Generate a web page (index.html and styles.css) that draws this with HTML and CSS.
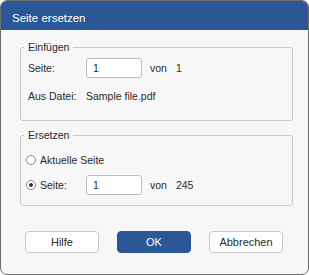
FILE: index.html
```html
<!DOCTYPE html>
<html lang="de">
  <head>
    <meta charset="utf-8" />
    <title>Seite ersetzen</title>
    <link rel="stylesheet" href="styles.css">
  </head>
  <body>
    <div class="dialog">
      <div class="titlebar">Seite ersetzen</div>
      <div class="dialog-body">
        <fieldset class="group group-insert">
          <legend>Einfügen</legend>
          <div class="row">
            <label for="src" class="label">Seite:</label>
            <input id="src" type="text" class="field" value="1">
            <span class="of">von</span>
            <span class="total">1</span>
          </div>
          <div class="row row-file">
            <span class="label">Aus Datei:</span>
            <span>Sample file.pdf</span>
          </div>
        </fieldset>
        <fieldset class="group group-replace">
          <legend>Ersetzen</legend>
          <div class="row">
            <input id="r1" type="radio" name="mode" class="radio">
            <label for="r1">Aktuelle Seite</label>
          </div>
          <div class="row row-page">
            <input id="r2" type="radio" name="mode" class="radio" checked>
            <label for="r2" class="label label-radio">Seite:</label>
            <input id="dst" type="text" class="field" value="1">
            <span class="of">von</span>
            <span class="total">245</span>
          </div>
        </fieldset>
        <div class="buttons">
          <button class="button">Hilfe</button>
          <button class="button button-primary">OK</button>
          <button class="button">Abbrechen</button>
        </div>
      </div>
    </div>
  </body>
</html>
```
FILE: styles.css
```css
*,:after,:before{box-sizing:border-box}
body{
  margin:0;
  background:#fff;
  color:#2a2a2a;
  font:10.5px/13px 'Liberation Sans',Arial,sans-serif;
}

.dialog{
  width:309px;
  height:275px;
  background:#f7f7f7;
  border:1px solid #6e6e6e;
  border-radius:7px;
  overflow:hidden;
}
.titlebar{
  height:30px;
  margin:-1px -1px 0;
  padding:11px 0 0 12px;
  background:#2b5797;
  color:#fff;
  font-size:11.5px;
  line-height:14px;
}

.dialog-body{
  padding:10px 15px 0 19px;
}
.group{
  margin:0;
  padding:4px 10px 14px 7px;
  border:1px solid #cacaca;
  border-radius:3px;
  min-width:0;
}
.group legend{
  margin-left:-4px;
  padding:0 4px;
  line-height:14px;
}
.group-replace{
  margin-top:7px;
  padding-top:8px;
  padding-bottom:10px;
}

.row{
  display:flex;
  align-items:center;
  height:20px;
}
.row-file{
  margin-top:8px;
}
.row-page{
  margin-top:5px;
}
.label{
  width:58px;
}
.label-radio{
  width:46px;
}
.field{
  width:56px;
  height:20px;
  margin:0;
  padding:0 6px;
  border:1px solid #bcbcbc;
  border-radius:3px;
  background:#fff;
  color:#2a2a2a;
  font:inherit;
}
.of{
  margin-left:8px;
}
.total{
  margin-left:9px;
}

.radio{
  -webkit-appearance:none;
  appearance:none;
  width:10px;
  height:10px;
  margin:0 4px 0 -2px;
  border:1px solid #8a8a8a;
  border-radius:50%;
  background:#fff;
  position:relative;
}
.radio:checked:after{
  content:'';
  position:absolute;
  left:2px;
  top:2px;
  width:4px;
  height:4px;
  border-radius:50%;
  background:#333;
}

.buttons{
  display:flex;
  gap:18px;
  margin:25px 0 0 5px;
}
.button{
  width:74px;
  height:22px;
  padding:0;
  border:1px solid #c8c8c8;
  border-radius:4px;
  background:#fff;
  color:#2a2a2a;
  font:inherit;
  font-size:11px;
}
.button-primary{
  background:#2b5797;
  border-color:#2b5797;
  color:#fff;
}
```
